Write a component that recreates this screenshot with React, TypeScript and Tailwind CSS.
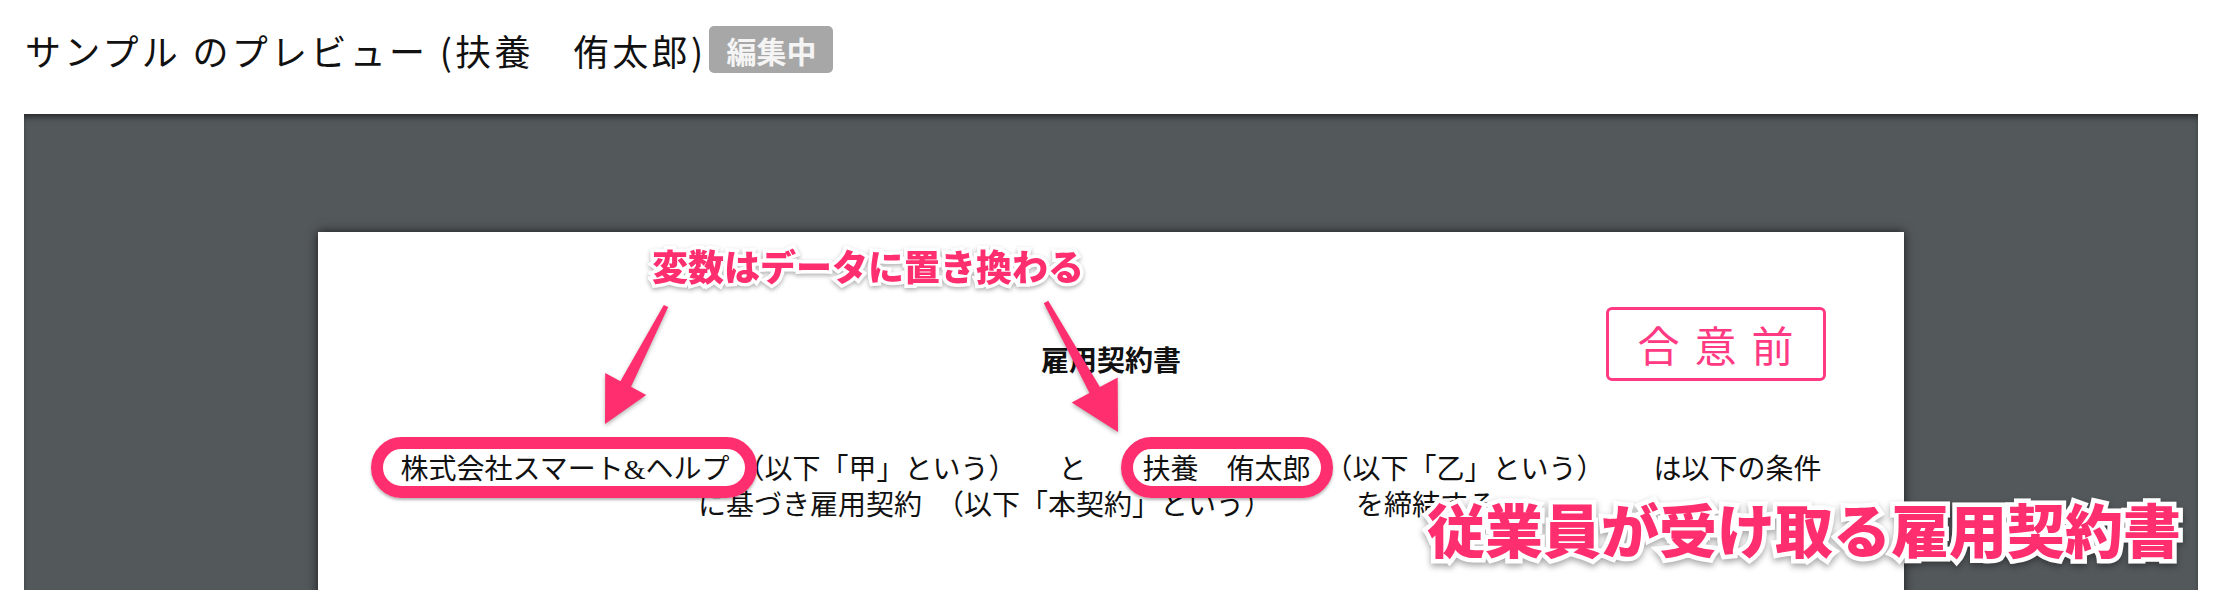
import { ReactNode } from "react";

const jp = "font-['Noto_Sans_CJK_JP',sans-serif]";

const Highlight = ({
  children,
  ring,
}: {
  children: ReactNode;
  ring: string;
}) => (
  <span className="relative inline-block leading-[36px]">
    {children}
    <span
      className={
        "pointer-events-none absolute top-[-15px] bottom-[-10px] rounded-full border-[12px] border-[#ff2e6e] shadow-[0_2px_3px_rgba(0,0,0,0.3)] " +
        ring
      }
    />
  </span>
);

const Arrows = () => (
  <svg
    className="pointer-events-none absolute inset-0 h-full w-full drop-shadow-[0_2px_2px_rgba(0,0,0,0.3)]"
    viewBox="0 0 1586 600"
  >
    <polygon
      fill="#ff2e6e"
      points="345.8,72.9 350.2,75.1 313,154.8 328.2,163.1 287,192 287.2,140.9 302.4,149.2"
    />
    <polygon
      fill="#ff2e6e"
      points="725.8,71.2 730.2,68.8 781.9,155.1 799.7,145.4 800,200 753.7,170.6 771.5,160.9"
    />
  </svg>
);

const Paper = () => (
  <div className="relative mx-auto h-[600px] w-[1586px] bg-white pt-[75px] font-['Liberation_Serif','Noto_Sans_CJK_JP',serif] text-[#111] shadow-[0_0_10px_rgba(0,0,0,0.7)]">
    <div className="grid grid-cols-[1fr_auto_1fr] items-start px-[78px]">
      <div />
      <h2 className="mt-[41px] text-[28px] font-semibold leading-[28px]">
        雇用契約書
      </h2>
      <div
        className={`${jp} flex h-[74px] w-[220px] items-center justify-center justify-self-end rounded-[6px] border-[3px] border-[#ff3a82] pl-[14px] text-[42px] leading-none tracking-[15px] text-[#ff3a82]`}
      >
        合意前
      </div>
    </div>

    <div className="mt-[71px] whitespace-pre text-center text-[28px] leading-[36px]">
      <p>
        <Highlight ring="left-[-30px] right-[-28px]">
          株式会社スマート&ヘルプ
        </Highlight>
        {" （以下「甲」という）　    と　    "}
        <Highlight ring="left-[-21px] right-[-23px]">扶養　侑太郎</Highlight>
        {"  （以下「乙」という）　　 は以下の条件"}
      </p>
      <p>{"に基づき雇用契約　（以下「本契約」という）　　　  を締結する。"}</p>
    </div>

    <Arrows />

    <p
      className={`${jp} pointer-events-none absolute left-[334px] top-[15px] text-[36px] font-black leading-none text-[#ff2e6e] [-webkit-text-stroke:7px_white] [paint-order:stroke_fill] drop-shadow-[0_2px_2px_rgba(0,0,0,0.3)]`}
    >
      変数はデータに置き換わる
    </p>
  </div>
);

export default function App() {
  return (
    <div className={`${jp} h-[590px] w-[2222px] overflow-hidden bg-white text-[#111]`}>
      <header className="mt-[26px] flex h-[47px] items-center pl-[25px]">
        <h1 className="text-[36px] font-normal leading-none tracking-[3.3px]">
          サンプル のプレビュー (扶養　侑太郎)
        </h1>
        <span className="ml-[3px] flex h-[47px] items-center rounded-[5px] bg-[#a7a7a7] px-[17px] text-[30px] font-bold leading-none text-[#f4f4f4]">
          編集中
        </span>
      </header>

      <main className="relative mx-[24px] mt-[41px] h-[476px] bg-[#53585b] pt-[118px] shadow-[inset_0_5px_6px_-2px_rgba(0,0,0,0.55)]">
        <Paper />
        <p className="pointer-events-none absolute left-[1403px] top-[385px] text-[58px] font-black leading-none text-[#ff2e6e] [-webkit-text-stroke:9px_white] [paint-order:stroke_fill] drop-shadow-[0_3px_3px_rgba(0,0,0,0.35)]">
          従業員が受け取る雇用契約書
        </p>
      </main>
    </div>
  );
}
